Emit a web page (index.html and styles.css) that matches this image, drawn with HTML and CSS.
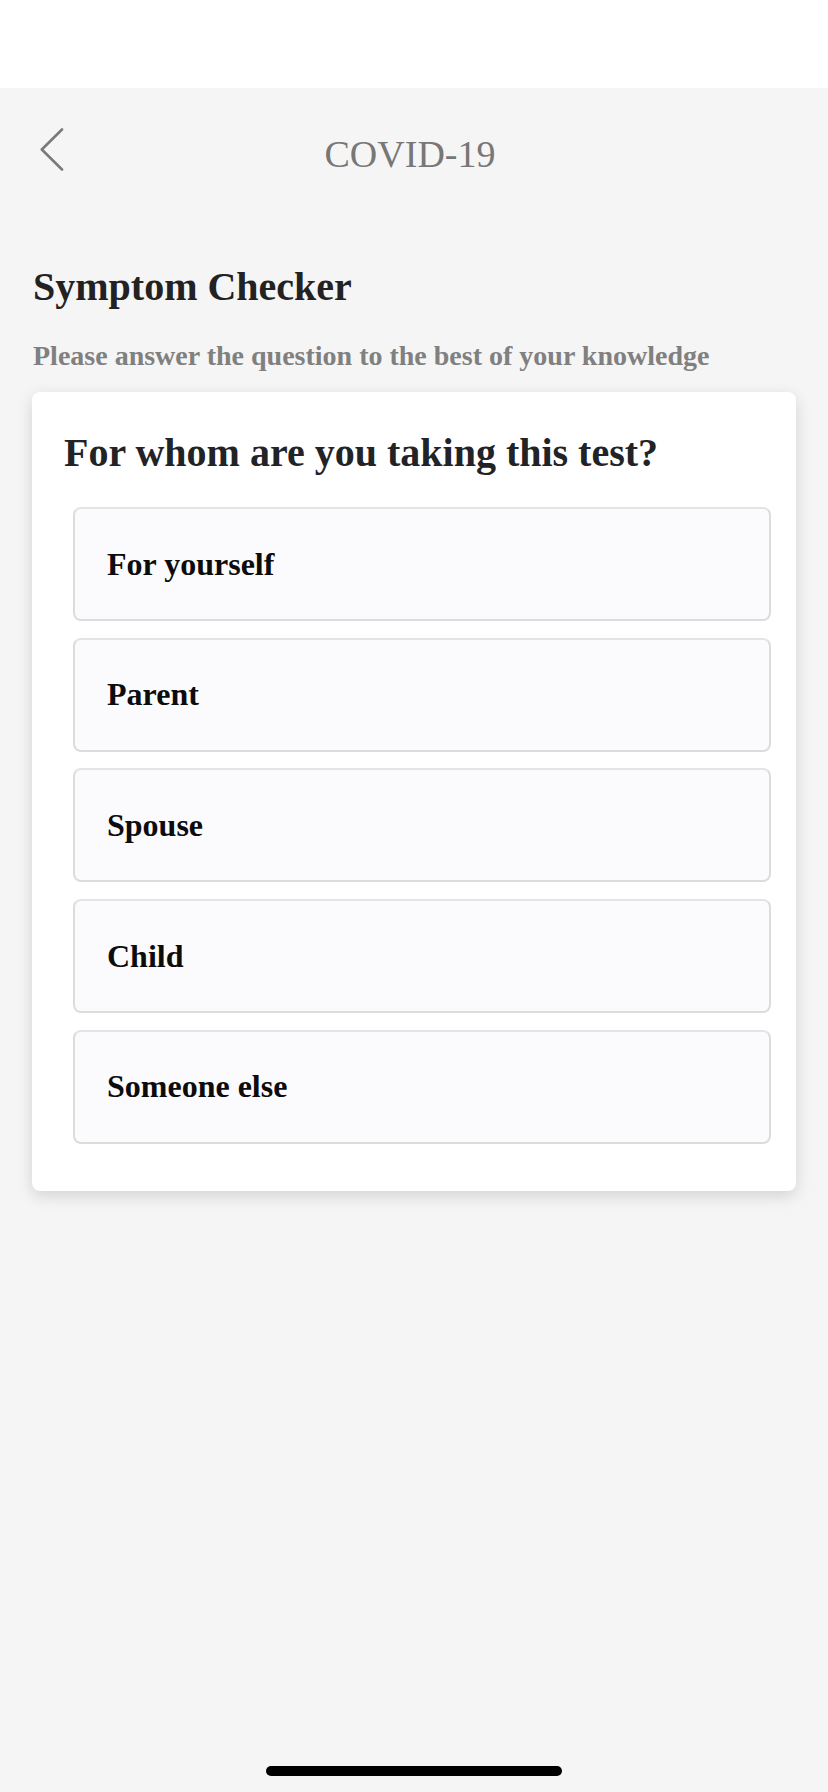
FILE: index.html
```html
<!DOCTYPE html>
<html lang="en">
<head>
<meta charset="utf-8">
<title>COVID-19 Symptom Checker</title>
<link rel="stylesheet" href="styles.css">
</head>
<body>
<div class="screen">
  <div class="status-bar"></div>
  <main class="page">
    <header class="nav">
      <div class="nav-side">
        <svg class="back-icon" width="24" height="43" viewBox="0 0 24 43" aria-hidden="true">
          <polyline points="22,1.5 1.8,21.5 22,41.5" fill="none" stroke="#7a7a7a" stroke-width="2.6" stroke-linecap="round" stroke-linejoin="round"/>
        </svg>
      </div>
      <h1 class="nav-title">COVID-19</h1>
      <div class="nav-side"></div>
    </header>

    <h2 class="page-title">Symptom Checker</h2>
    <p class="page-subtitle">Please answer the question to the best of your knowledge</p>

    <section class="card">
      <h3 class="question">For whom are you taking this test?</h3>
      <div class="options">
        <div class="option">For yourself</div>
        <div class="option">Parent</div>
        <div class="option">Spouse</div>
        <div class="option">Child</div>
        <div class="option">Someone else</div>
      </div>
    </section>
  </main>
  <div class="home-area"><div class="home-indicator"></div></div>
</div>
</body>
</html>
```

FILE: styles.css
```css
* {
  box-sizing: border-box;
}

html, body {
  margin: 0;
  padding: 0;
}

body {
  font-family: "Liberation Serif", "Times New Roman", serif;
  background: #f5f5f5;
}

.screen {
  min-height: 1792px;
  display: flex;
  flex-direction: column;
  background: #f5f5f5;
}

.status-bar {
  height: 88px;
  background: #ffffff;
}

.page {
  flex: 1;
  display: flex;
  flex-direction: column;
}

.nav {
  display: grid;
  grid-template-columns: 1fr auto 1fr;
  align-items: start;
  padding: 44px 8px 0 0;
}

.back-icon {
  display: block;
  margin: -4px 0 0 40px;
}

.nav-title {
  margin: 0;
  font-size: 38px;
  line-height: 44px;
  font-weight: 400;
  color: #777777;
  text-align: center;
}

.page-title {
  margin: 88px 0 0 33px;
  font-size: 40px;
  line-height: 46px;
  font-weight: 700;
  color: #222222;
}

.page-subtitle {
  margin: 30px 0 0 33px;
  font-size: 28px;
  line-height: 32px;
  font-weight: 700;
  color: #808080;
}

.card {
  margin: 20px 32px 0 32px;
  background: #ffffff;
  border-radius: 8px;
  box-shadow: 0 5px 16px rgba(0, 0, 0, 0.14);
  padding: 38px 0 47px 0;
}

.question {
  margin: 0;
  padding: 0 32px;
  font-size: 40px;
  line-height: 46px;
  font-weight: 700;
  color: #222326;
}

.options {
  margin-top: 31px;
  padding: 0 25px 0 41px;
  display: flex;
  flex-direction: column;
  gap: 16.7px;
}

.option {
  height: 114px;
  display: flex;
  align-items: center;
  padding: 0 32px;
  background: #fbfbfd;
  border: 2px solid #dcdcdc;
  border-top-color: #e4e4e4;
  border-radius: 8px;
  font-size: 32px;
  font-weight: 700;
  color: #0c0c0c;
}

.home-area {
  display: flex;
  justify-content: center;
  padding-bottom: 16px;
}

.home-indicator {
  width: 296px;
  height: 10px;
  border-radius: 5px;
  background: #000000;
}
```
